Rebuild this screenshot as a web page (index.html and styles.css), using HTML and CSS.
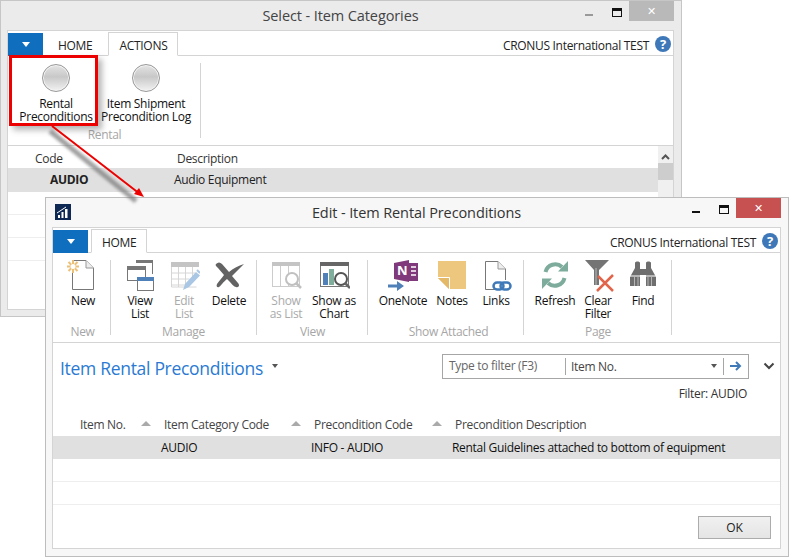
FILE: index.html
```html
<!DOCTYPE html>
<html lang="en">

<head>
    <meta charset="UTF-8">
    <title>Item Rental Preconditions</title>
    <link rel="stylesheet" href="styles.css">
</head>

<body>
    <!-- back window -->
    <section class="window window-back">
        <div class="titlebar">
            <span class="title">Select - Item Categories</span>
            <span class="win-min"></span>
            <span class="win-max"></span>
            <span class="win-close">&#x2715;</span>
        </div>
        <div class="panel">
            <div class="tabs">
                <span class="file-btn"><i class="caret-white"></i></span>
                <span class="tab">HOME</span>
                <span class="tab tab-on">ACTIONS</span>
                <span class="company">CRONUS International TEST</span>
                <span class="help">?</span>
            </div>
            <div class="ribbon">
                <div class="group g-rental">
                    <div class="items">
                        <div class="item w90">
                            <span class="ball"></span>
                            <span class="label">Rental<br>Preconditions</span>
                        </div>
                        <div class="item w90">
                            <span class="ball"></span>
                            <span class="label">Item Shipment<br>Precondition Log</span>
                        </div>
                    </div>
                    <div class="group-name">Rental</div>
                </div>
            </div>
            <div class="back-list">
                <div class="back-rows">
                    <div class="back-head"><span class="c-code">Code</span><span>Description</span></div>
                    <div class="back-row selected"><b class="c-audio">AUDIO</b><span>Audio Equipment</span></div>
                    <div class="back-row"></div>
                    <div class="back-row"></div>
                    <div class="back-row"></div>
                </div>
                <div class="scrollbar">
                    <svg width="15" height="10" viewBox="0 0 15 10"><path d="M4 8l3.500-3.500L11 8" fill="none" stroke="#555" stroke-width="2"/></svg>
                    <span class="thumb"></span>
                </div>
            </div>
        </div>
    </section>

    <!-- front window -->
    <section class="window window-front">
        <div class="titlebar">
            <svg class="app-logo" width="16" height="16" viewBox="0 0 16 16">
                <rect width="16" height="16" fill="#0e2a54"/>
                <path d="M3 14v-3h2v3zM6.500 14V8h2v6zM10 14V5h2.500v9z" fill="#fff"/>
                <path d="M2 9l9-6" stroke="#fff" stroke-width="1"/>
            </svg>
            <span class="title">Edit - Item Rental Preconditions</span>
            <span class="win-min dark"></span>
            <span class="win-max"></span>
            <span class="win-close red">&#x2715;</span>
        </div>
        <div class="panel">
            <div class="tabs">
                <span class="file-btn"><i class="caret-white"></i></span>
                <span class="tab tab-on">HOME</span>
                <span class="company">CRONUS International TEST</span>
                <span class="help">?</span>
            </div>
            <div class="ribbon">
                <div class="group g-new">
                    <div class="items">
                        <div class="item w56">
                            <svg class="icon" width="32" height="32" viewBox="0 0 32 32">
                                <path d="M6 0.500H19L26.500 8V29.500H5.500V9" fill="#fff" stroke="#777"/>
                                <path d="M19 0.500V8H26.500" fill="#eee" stroke="#999"/>
                                <g stroke="#ecc077" stroke-width="2"><path d="M6 0v13M0 6.500h12M1.500 2l9 9M10.500 2l-9 9"/></g>
                                <circle cx="6" cy="6.500" r="2.500" fill="#fff"/>
                            </svg>
                            <span class="label">New</span>
                        </div>
                    </div>
                    <div class="group-name">New</div>
                </div>
                <div class="group g-manage">
                    <div class="items">
                        <div class="item w44">
                            <svg class="icon" width="32" height="32" viewBox="0 0 32 32">
                                <path d="M12.500 1.500H28.500V14" fill="none" stroke="#777"/>
                                <rect x="12" y="0" width="17" height="3" fill="#777"/>
                                <rect x="3.500" y="6.500" width="18" height="14" fill="#fff" stroke="#777"/>
                                <rect x="3" y="6" width="19" height="4" fill="#777"/>
                                <rect x="13.500" y="17.500" width="16" height="13" fill="#fff" stroke="#777"/>
                                <rect x="13" y="17" width="17" height="4" fill="#4f81b8"/>
                            </svg>
                            <span class="label">View<br>List</span>
                        </div>
                        <div class="item w44 off">
                            <svg class="icon" width="32" height="32" viewBox="0 0 32 32">
                                <rect x="3" y="2" width="28" height="5" fill="#c4c4c4"/>
                                <path d="M3.500 7v20h25M3.500 13h24M3.500 19h18M3.500 25h14M10.500 7v20M17.500 7v20M24.500 7v12" fill="none" stroke="#d6d6d6"/>
                                <path d="M15 30l2-6L28 12l4 3.500L21 27z" fill="#a9c6e4"/>
                                <path d="M29 10l3 3" stroke="#a9c6e4" stroke-width="2"/>
                            </svg>
                            <span class="label">Edit<br>List</span>
                        </div>
                        <div class="item w46">
                            <svg class="icon" width="32" height="32" viewBox="0 0 32 32">
                                <path d="M3 4C5 2 7 2 9 4L16 12C21 8 25 6 31 4C27 8 23 12 19 16L25 23C27 25 26 28 23 27C21 27 19 24 14 19C10 22 8 26 6 27C4 28 3 26 4 24C6 21 9 18 11 15L5 8C3 6 2 5 3 4Z" fill="#636363"/>
                            </svg>
                            <span class="label">Delete</span>
                        </div>
                    </div>
                    <div class="group-name">Manage</div>
                </div>
                <div class="group g-view">
                    <div class="items">
                        <div class="item w48 off">
                            <svg class="icon" width="32" height="32" viewBox="0 0 32 32">
                                <rect x="2.500" y="2.500" width="27" height="24" fill="#fff" stroke="#ccc"/>
                                <rect x="2" y="2" width="28" height="4" fill="#c4c4c4"/>
                                <path d="M10.500 6v20M18.500 6v20" stroke="#ccc"/>
                                <circle cx="22" cy="19" r="6" fill="#fff" stroke="#c0c0c0" stroke-width="2"/>
                                <path d="M26 23l5 5" stroke="#c0c0c0" stroke-width="2.500"/>
                            </svg>
                            <span class="label">Show<br>as List</span>
                        </div>
                        <div class="item w48">
                            <svg class="icon" width="32" height="32" viewBox="0 0 32 32">
                                <rect x="2.500" y="2.500" width="28" height="24" fill="#fff" stroke="#777"/>
                                <rect x="2" y="2" width="29" height="4" fill="#666"/>
                                <rect x="5" y="13" width="5" height="12" fill="#4f81b8"/>
                                <rect x="11" y="9" width="5" height="16" fill="#7fae9c"/>
                                <circle cx="23" cy="19" r="6" fill="#fff" stroke="#555" stroke-width="2"/>
                                <path d="M27 23l5 5" stroke="#666" stroke-width="2.500"/>
                            </svg>
                            <span class="label">Show as<br>Chart</span>
                        </div>
                    </div>
                    <div class="group-name">View</div>
                </div>
                <div class="group g-attached">
                    <div class="items">
                        <div class="item w50">
                            <svg class="icon" width="32" height="32" viewBox="0 0 32 32">
                                <rect x="21" y="3" width="10" height="18" fill="#80397b"/>
                                <path d="M24 7h5M24 11h5M24 15h5" stroke="#fff" stroke-width="1.500"/>
                                <path d="M7 3L22 0V22L7 19Z" fill="#80397b"/>
                                <text class="note-n" x="10" y="15">N</text>
                                <path d="M1 24.500H10V21L17 26L10 31V27.500H1Z" fill="#4f81b8"/>
                            </svg>
                            <span class="label">OneNote</span>
                        </div>
                        <div class="item w48">
                            <svg class="icon" width="32" height="32" viewBox="0 0 32 32">
                                <path d="M2 1H30V29H13L2 18Z" fill="#edc77d"/>
                                <path d="M2 18H13V29Z" fill="#e3b866"/>
                                <path d="M2 17.500H13.500V29" fill="none" stroke="#fff"/>
                            </svg>
                            <span class="label">Notes</span>
                        </div>
                        <div class="item w40">
                            <svg class="icon" width="32" height="32" viewBox="0 0 32 32">
                                <path d="M5.500 29.500V1.500H18L25.500 9V20M19 29.500H5.500" fill="#fff" stroke="#777"/>
                                <path d="M18 1.500V9H25.500" fill="#eee" stroke="#999"/>
                                <rect x="13.500" y="22.500" width="10" height="7" rx="3.500" fill="none" stroke="#3f79b8" stroke-width="2.500"/>
                                <rect x="20.500" y="22.500" width="10" height="7" rx="3.500" fill="none" stroke="#3f79b8" stroke-width="2.500"/>
                            </svg>
                            <span class="label">Links</span>
                        </div>
                    </div>
                    <div class="group-name">Show Attached</div>
                </div>
                <div class="group g-page">
                    <div class="items">
                        <div class="item w44">
                            <svg class="icon" width="32" height="32" viewBox="0 0 32 32">
                                <path d="M6.500 12A10 10 0 0 1 23 7" fill="none" stroke="#7dab9c" stroke-width="4"/>
                                <path d="M19 11.500H29V1Z" fill="#7dab9c"/>
                                <path d="M25.500 18A10 10 0 0 1 9 23" fill="none" stroke="#7dab9c" stroke-width="4"/>
                                <path d="M13 18.500H3V29Z" fill="#7dab9c"/>
                            </svg>
                            <span class="label">Refresh</span>
                        </div>
                        <div class="item w42">
                            <svg class="icon" width="32" height="32" viewBox="0 0 32 32">
                                <path d="M3 0H27L17 10V25H12V10Z" fill="#747474"/>
                                <path d="M14 8V25" stroke="#bbb"/>
                                <path d="M15 31L31 15M16 16L31 31" stroke="#e0654b" stroke-width="2.500"/>
                            </svg>
                            <span class="label">Clear<br>Filter</span>
                        </div>
                        <div class="item w48">
                            <svg class="icon" width="32" height="32" viewBox="0 0 32 32">
                                <path d="M8 3C8 1 13 1 13 3V9H19V3C19 1 24 1 24 3V8L29 17V26H19V15H13V26H3V17L8 8Z" fill="#6e6e6e"/>
                                <path d="M7.500 17v9M11 17v9M21 17v9M24.500 17v9" stroke="#b5b5b5"/>
                                <path d="M3 16H13M19 16H29" stroke="#fff"/>
                            </svg>
                            <span class="label">Find</span>
                        </div>
                    </div>
                    <div class="group-name">Page</div>
                </div>
            </div>
            <div class="content">
                <div class="content-top">
                    <h1 class="page-title">Item Rental Preconditions</h1>
                    <i class="caret-gray"></i>
                    <div class="filter-box">
                        <span class="filter-hint">Type to filter (F3)</span>
                        <span class="filter-field">Item No.</span>
                        <i class="caret-gray"></i>
                        <span class="filter-go">
                            <svg width="12" height="10" viewBox="0 0 12 10"><path d="M0 5H9M6 1l4 4-4 4" fill="none" stroke="#3f79b8" stroke-width="2"/></svg>
                        </span>
                    </div>
                    <svg class="chevron" width="12" height="8" viewBox="0 0 12 8"><path d="M1.500 1.500L6 6l4.500-4.500" fill="none" stroke="#444" stroke-width="2"/></svg>
                </div>
                <div class="filter-note">Filter: AUDIO</div>
                <div class="grid-head">
                    <span class="col col-first">Item No.<i class="sort"></i></span>
                    <span class="col">Item Category Code<i class="sort"></i></span>
                    <span class="col">Precondition Code<i class="sort"></i></span>
                    <span class="col">Precondition Description</span>
                </div>
                <div class="grid-row selected">
                    <span></span>
                    <span>AUDIO</span>
                    <span>INFO - AUDIO</span>
                    <span>Rental Guidelines attached to bottom of equipment</span>
                </div>
                <div class="grid-row"></div>
                <div class="grid-row"></div>
                <div class="buttons"><button class="ok-btn">OK</button></div>
            </div>
        </div>
    </section>

    <!-- red callout drawn over the screenshot -->
    <div class="callout"></div>
    <svg class="callout-arrow" width="160" height="90" viewBox="0 0 160 90">
        <defs>
            <filter id="soft"><feGaussianBlur stdDeviation="1.500"/></filter>
        </defs>
        <path d="M50 9L136 79" stroke="#777" stroke-width="5" opacity="0.7" filter="url(#soft)"/>
        <path d="M52 4L140 72" stroke="#ec0000" stroke-width="2"/>
        <path d="M144 75L134 72L139 66Z" fill="#ec0000"/>
    </svg>
</body>

</html>
```

FILE: styles.css
```css
body {
    font-family: 'Open Sans', 'Liberation Sans', sans-serif;
    font-size: 12px;
    letter-spacing: -0.3px;
    color: #222;
    margin: 0;
    background-color: #fff;
    height: 557px;
    overflow: hidden;
}

.window {
    position: absolute;
    box-sizing: border-box;
    border: 1px solid #c6c6c6;
    background-color: #ebebeb;
}

.window-back {
    left: 0;
    top: 0;
    width: 682px;
    height: 317px;
    padding: 0 7px 0 6px;
}

.window-front {
    left: 45px;
    top: 197px;
    width: 744px;
    height: 360px;
    padding: 0 7px 7px 6px;
    background-color: #f7f7f7;
    border-color: #bdbdbd;
}

.titlebar {
    position: relative;
    height: 28px;
    padding-bottom: 1px;
    display: flex;
    justify-content: center;
    align-items: center;
}

.title {
    font-size: 14.500px;
    letter-spacing: -0.1px;
    color: #444;
}

.window-front .title {
    color: #333;
}

.app-logo {
    position: absolute;
    left: 3px;
    top: 6px;
}

.win-min {
    position: absolute;
    right: 81px;
    top: 13px;
    width: 8px;
    height: 2px;
    background-color: #999;
}

.win-min.dark {
    background-color: #111;
}

.win-max {
    position: absolute;
    right: 52px;
    top: 7px;
    width: 8px;
    height: 5px;
    border: 1px solid #111;
    border-top-width: 3px;
}

.win-close {
    position: absolute;
    right: 0;
    top: 0;
    width: 45px;
    height: 20px;
    background-color: #b9b9b9;
    color: #fff;
    font-size: 11px;
    line-height: 20px;
    text-align: center;
}

.win-close.red {
    background-color: #c75050;
}

.panel {
    background-color: #fff;
    border: 1px solid #d4d4d4;
    box-sizing: border-box;
}

.window-back .panel {
    height: 280px;
    overflow: hidden;
}

.window-front .panel {
    height: 322px;
}

.tabs {
    display: flex;
    align-items: flex-end;
    height: 24px;
    border-bottom: 1px solid #d4d4d4;
}

.file-btn {
    width: 35px;
    height: 23px;
    background-color: #106ebe;
    display: flex;
    justify-content: center;
    align-items: center;
    margin-right: 3px;
    margin-bottom: -1px;
}

.caret-white {
    border: 4px solid transparent;
    border-top: 5px solid #fff;
    border-bottom: none;
}

.tab {
    padding: 2px 12px 0;
    margin-right: 4px;
    height: 20px;
    line-height: 22px;
    color: #222;
}

.tab-on {
    border: 1px solid #d4d4d4;
    border-bottom: 1px solid #fff;
    margin-bottom: -1px;
    background-color: #fff;
    padding: 2px 10px 0;
}

.company {
    margin-left: auto;
    line-height: 22px;
    padding-top: 2px;
    height: 20px;
    margin-right: 6px;
}

.help {
    width: 16px;
    height: 16px;
    border-radius: 50%;
    background-color: #3f78b8;
    color: #fff;
    font-weight: bold;
    font-size: 13px;
    line-height: 16px;
    text-align: center;
    margin: 0 2px 3px 0;
}

.ribbon {
    display: flex;
    height: 90px;
    border-bottom: 1px solid #d4d4d4;
    padding-top: 7px;
    box-sizing: border-box;
}

.group {
    box-sizing: border-box;
    border-right: 1px solid #d4d4d4;
    height: 75px;
    display: flex;
    flex-direction: column;
    justify-content: space-between;
}

.g-rental { width: 193px; padding: 0 2px 0 3px; }
.g-new { width: 58px; padding-left: 2px; }
.g-manage { width: 146px; padding: 0 7px; }
.g-view { width: 111px; padding: 0 4px 0 5px; }
.g-attached { width: 156px; padding: 0 4px 0 10px; }
.g-page { width: 148px; padding: 0 8px 0 9px; }

.items {
    display: flex;
}

.item {
    flex: none;
    display: flex;
    flex-direction: column;
    align-items: center;
    text-align: center;
}

.w40 { width: 40px; }
.w42 { width: 42px; }
.w44 { width: 44px; }
.w46 { width: 46px; }
.w48 { width: 48px; }
.w50 { width: 50px; }
.w56 { width: 56px; }
.w90 { width: 90px; }

.icon {
    display: block;
    margin-bottom: 2px;
}

.label {
    line-height: 13px;
    white-space: nowrap;
    color: #111;
}

.off .label {
    color: #aaa;
}

.group-name {
    text-align: center;
    color: #a6a6a6;
    line-height: 13px;
    margin-bottom: -3px;
}

.ball {
    display: block;
    box-sizing: border-box;
    width: 28px;
    height: 28px;
    margin: 1px 0 5px;
    border-radius: 50%;
    border: 1px solid #999;
    background: linear-gradient(#e4e4e4, #c8c8c8 45%, #f2f2f2);
    box-shadow: inset 0 0 0 1px #f4f4f4;
}

.back-list {
    display: flex;
}

.back-rows {
    flex: 1;
}

.back-head {
    display: flex;
    height: 22px;
    line-height: 25px;
    padding-left: 169px;
    color: #333;
}

.c-code {
    margin-left: -142px;
    width: 142px;
}

.back-row {
    display: flex;
    height: 22px;
    line-height: 24px;
    padding-left: 166px;
    border-bottom: 1px solid #eee;
}

.back-row.selected {
    height: 24px;
    border-bottom: none;
}

.c-audio {
    margin-left: -124px;
    width: 124px;
}

.selected {
    background-color: #e0e0e0;
}

.scrollbar {
    width: 15px;
    background-color: #f0f0f0;
    height: 140px;
}

.scrollbar svg {
    display: block;
    margin-top: 5px;
    margin-bottom: 2px;
}

.thumb {
    display: block;
    height: 17px;
    background-color: #cdcdcd;
}

.page-title {
    flex: none;
    width: 203px;
    margin: 3px 0 0;
    font-size: 17.500px;
    font-weight: normal;
    letter-spacing: -0.3px;
    white-space: nowrap;
    color: #2a7ad3;
}

.content-top {
    display: flex;
    align-items: center;
    height: 26px;
    padding: 10px 0 0 7px;
}

.caret-gray {
    flex: none;
    border: 3.500px solid transparent;
    border-top: 4px solid #555;
    border-bottom: none;
}

.content-top > .caret-gray {
    margin-left: 9px;
}

.filter-box {
    flex: none;
    display: flex;
    align-items: center;
    width: 307px;
    height: 25px;
    box-sizing: border-box;
    border: 1px solid #a6a6a6;
    margin-left: 164px;
}

.filter-hint {
    width: 123px;
    padding-left: 6px;
    box-sizing: border-box;
    color: #666;
    height: 17px;
    line-height: 15px;
    border-right: 1px solid #a6a6a6;
}

.filter-field {
    flex: 1;
    padding-left: 5px;
    color: #444;
}

.filter-go {
    width: 25px;
    margin-left: 6px;
    height: 17px;
    border-left: 1px solid #a6a6a6;
    box-sizing: border-box;
    display: flex;
    justify-content: center;
    align-items: center;
}

.chevron {
    flex: none;
    margin-left: 14px;
}

.filter-note {
    text-align: right;
    padding-right: 33px;
    height: 16px;
    line-height: 16px;
    margin-top: 7px;
    color: #333;
}

.grid-head,
.grid-row {
    display: grid;
    grid-template-columns: 108px 150px 141px 1fr;
}

.grid-head {
    margin-top: 9px;
    height: 25px;
    line-height: 27px;
    color: #444;
}

.col {
    position: relative;
    padding-left: 3px;
}

.col-first {
    padding-left: 27px;
}

.sort {
    position: absolute;
    right: 10px;
    top: 10px;
    border: 5px solid transparent;
    border-bottom: 5px solid #aaa;
    border-top: none;
}

.grid-row {
    height: 22px;
    line-height: 23px;
    color: #111;
    border-bottom: 1px solid #eee;
}

.grid-row.selected {
    height: 23px;
    border-bottom: none;
}

.buttons {
    display: flex;
    justify-content: flex-end;
    padding: 11px 9px 0 0;
}

.ok-btn {
    width: 73px;
    height: 23px;
    border: 1px solid #acacac;
    background: linear-gradient(#f0f0f0, #e5e5e5);
    font: inherit;
    color: #222;
    padding: 0;
}

.callout {
    position: absolute;
    left: 9px;
    top: 55px;
    width: 83px;
    height: 65px;
    border: 3px solid #ec0000;
    box-shadow: 4px 4px 6px rgba(90, 90, 90, 0.45);
}

.callout-arrow {
    position: absolute;
    left: 0;
    top: 122px;
}

.note-n {
    font-family: 'Open Sans', sans-serif;
    font-size: 13px;
    font-weight: bold;
    fill: #fff;
}
```
